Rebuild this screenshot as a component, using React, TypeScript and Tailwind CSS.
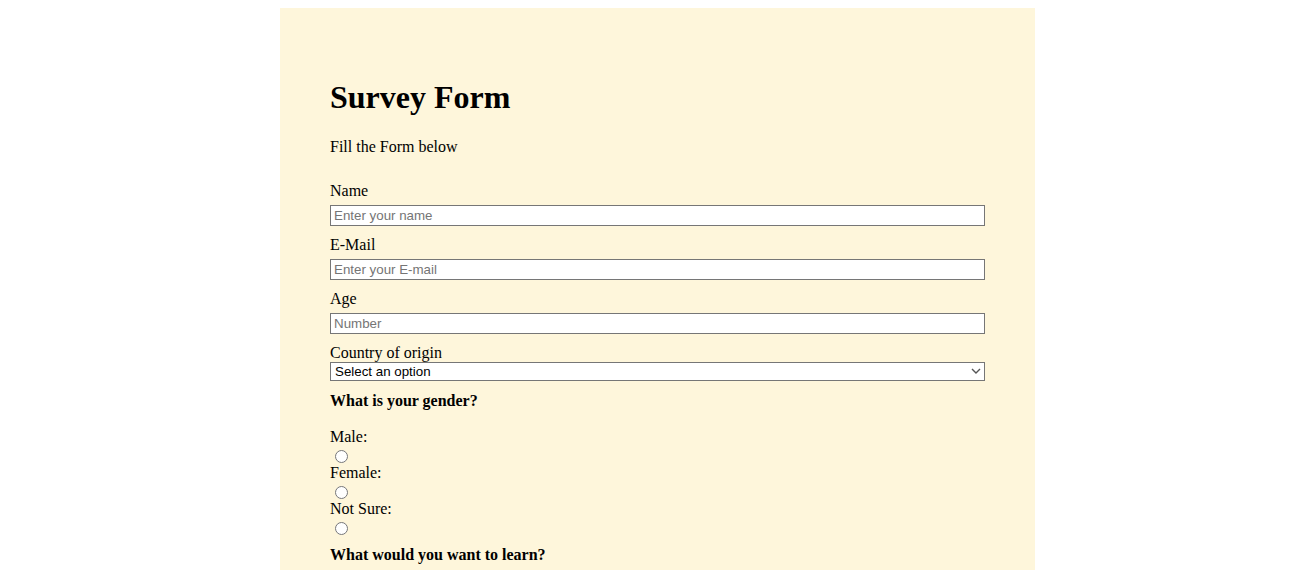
import { useState } from "react";

export default function App() {
    const [gender, setGender] = useState("");

    return (
        <div className="min-h-screen bg-white pt-2 font-['Liberation_Serif',serif] text-black">
            <div className="ml-[280px] w-[755px] bg-[#fef6db] px-[50px] pt-[50px] pb-10">
                <h1 className="my-[21px] text-[32px] font-bold leading-[37px]">Survey Form</h1>
                <p className="pt-[2px] text-base leading-[16px]">Fill the Form below</p>

                <form className="mt-[26px] flex flex-col text-base">
                    <label htmlFor="name" className="pt-px leading-[17px]">Name</label>
                    <input
                        id="name"
                        type="text"
                        placeholder="Enter your name"
                        className="mt-[6px] h-[21px] w-full border border-[#767676] bg-white px-[3px] font-['Liberation_Sans',sans-serif] text-[13.33px] placeholder:text-[#757575]"
                    />

                    <label htmlFor="email" className="mt-[9px] pt-px leading-[17px]">E-Mail</label>
                    <input
                        id="email"
                        type="email"
                        placeholder="Enter your E-mail"
                        className="mt-[6px] h-[21px] w-full border border-[#767676] bg-white px-[3px] font-['Liberation_Sans',sans-serif] text-[13.33px] placeholder:text-[#757575]"
                    />

                    <label htmlFor="age" className="mt-[9px] pt-px leading-[17px]">Age</label>
                    <input
                        id="age"
                        type="number"
                        placeholder="Number"
                        className="mt-[6px] h-[21px] w-full border border-[#767676] bg-white px-[3px] font-['Liberation_Sans',sans-serif] text-[13.33px] placeholder:text-[#757575]"
                    />

                    <label htmlFor="country" className="mt-[9px] pt-px leading-[17px]">Country of origin</label>
                    <div className="relative mt-px">
                        <select
                            id="country"
                            defaultValue=""
                            className="block h-[19px] w-full appearance-none border border-[#767676] bg-white pl-1 font-['Liberation_Sans',sans-serif] text-[13.33px] leading-[17px] text-black"
                        >
                            <option value="">Select an option</option>
                            <option value="br">Brazil</option>
                            <option value="us">United States</option>
                            <option value="other">Other</option>
                        </select>
                        <svg
                            className="pointer-events-none absolute right-[4px] top-[5px]"
                            width="10"
                            height="8"
                            viewBox="0 0 10 8"
                            fill="none"
                        >
                            <path d="M1 2 L5 6 L9 2" stroke="#555" strokeWidth="1.4" />
                        </svg>
                    </div>

                    <p className="mt-[10px] pt-px font-bold leading-[17px]">What is your gender?</p>

                    <div className="mt-[18px] flex flex-col">
                        {["Male", "Female", "Not Sure"].map((g) => (
                            <div key={g} className="flex flex-col">
                                <label className="pt-px leading-[17px]">{g}:</label>
                                <div className="flex h-[18px] items-end">
                                    <input
                                        type="radio"
                                        name="gender"
                                        value={g}
                                        checked={gender === g}
                                        onChange={() => setGender(g)}
                                        className="ml-[5px] h-[13px] w-[13px]"
                                    />
                                </div>
                            </div>
                        ))}
                    </div>

                    <p className="mt-[10px] pt-px font-bold leading-[17px]">What would you want to learn?</p>
                </form>
            </div>
        </div>
    );
}
